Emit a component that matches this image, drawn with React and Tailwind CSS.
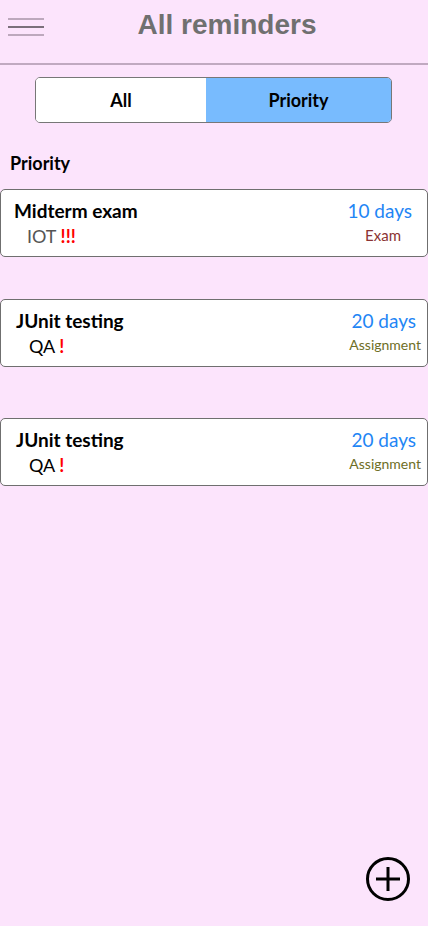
import React from "react";

function Card({ title, course, marks, days, daysPr, type, typeColor, typeSize, pl, mt }) {
  return (
    <div className={`${mt} h-[68px] w-full rounded-[5px] border border-[#6f6f6f] bg-white flex justify-between ${pl} pr-[6px] pt-[8px]`}>
      <div className="flex flex-col">
        <div className="text-[19px] font-bold leading-[26px] text-black">{title}</div>
        <div className="pl-[13px] text-[18px] leading-[24px] text-[#333]">
          <span className={course === "IOT" ? "text-[#555]" : "text-black"}>{course}</span>{" "}
          <span className="font-bold text-[#ff0000]">{marks}</span>
        </div>
      </div>
      <div className="flex flex-col items-end">
        <div className={`text-[19px] leading-[26px] text-[#1f86f5] ${daysPr}`}>{days}</div>
        <div className={`leading-[22px] ${typeSize}`} style={{ color: typeColor }}>{type}</div>
      </div>
    </div>
  );
}

export default function App() {
  return (
    <div className="relative min-h-[926px] w-[428px] bg-[#fce4fc]" style={{ fontFamily: "Lato, 'Open Sans', sans-serif" }}>
      <div className="relative h-[65px] border-b-2 border-[#c0a9c0]">
        <div className="absolute left-[8px] top-[18px] flex w-[36px] flex-col gap-[6px]">
          <div className="h-[2px] bg-[#bda8bd]" />
          <div className="h-[2px] bg-[#7b6f7b]" />
          <div className="h-[2px] bg-[#bda8bd]" />
        </div>
        <div className="pl-[26px] pt-[4px] text-center text-[28px] font-bold text-[#707070]" style={{ fontFamily: "'Liberation Sans', Arial, sans-serif" }}>
          All reminders
        </div>
      </div>
      <div className="px-[35px] pt-[12px] pr-[36px]">
        <div className="flex h-[46px] overflow-hidden rounded-[5px] border border-[#777]">
          <div className="flex w-[170px] items-center justify-center bg-white text-[18px] font-bold text-black">All</div>
          <div className="flex flex-1 items-center justify-center bg-[#78bbfe] text-[18px] font-bold text-black">Priority</div>
        </div>
      </div>
      <div className="pl-[10px] pt-[28px] text-[18px] font-bold leading-[24px] text-black">Priority</div>
      <div className="flex flex-col px-0">
        <Card mt="mt-[14px]" pl="pl-[13px]" title="Midterm exam" course="IOT" marks="!!!" days="10 days" daysPr="pr-[9px]" type="Exam" typeColor="#8b3333" typeSize="text-[15px] pr-[20px]" />
        <Card mt="mt-[42px]" pl="pl-[15px]" title="JUnit testing" course="QA" marks="!" days="20 days" daysPr="pr-[5px]" type="Assignment" typeColor="#6e6e26" typeSize="text-[14px]" />
        <Card mt="mt-[51px]" pl="pl-[15px]" title="JUnit testing" course="QA" marks="!" days="20 days" daysPr="pr-[5px]" type="Assignment" typeColor="#6e6e26" typeSize="text-[14px]" />
      </div>
      <div className="absolute left-[365px] top-[856px]">
        <svg width="46" height="46" viewBox="0 0 46 46" fill="none" stroke="black" strokeWidth="3">
          <circle cx="23" cy="23" r="20.5" />
          <line x1="23" y1="11" x2="23" y2="35" />
          <line x1="11" y1="23" x2="35" y2="23" />
        </svg>
      </div>
    </div>
  );
}
